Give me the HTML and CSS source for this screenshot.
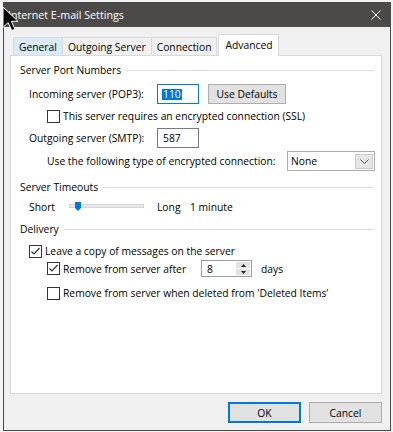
FILE: index.html
```html
<!DOCTYPE html>
<html lang="en">
<head>
    <meta charset="UTF-8">
    <meta name="viewport" content="width=device-width, initial-scale=1.0">
    <title>Internet E-mail Settings</title>
    <link rel="stylesheet" href="styles.css">
</head>
<body>
<div class="screen">
    <div class="dialog">
        <div class="titlebar">
            <span class="title">Internet E-mail Settings</span>
            <svg class="close" width="10" height="10" viewBox="0 0 10 10">
                <path d="M0.5 0.5 L9.5 9.5 M9.5 0.5 L0.5 9.5" />
            </svg>
        </div>

        <div class="dialog-body">
            <div class="tabs">
                <div class="tab tab-hover">General</div>
                <div class="tab">Outgoing Server</div>
                <div class="tab">Connection</div>
                <div class="tab tab-active">Advanced</div>
            </div>

            <div class="panel">
                <div class="group-title first">Server Port Numbers</div>

                <div class="row row-incoming indent-1">
                    <span class="field-label">Incoming server (POP3):</span>
                    <div class="textbox focused"><span class="selection">110</span></div>
                    <button class="btn btn-small">Use Defaults</button>
                </div>

                <div class="row row-ssl indent-2">
                    <span class="check"></span>
                    <span>This server requires an encrypted connection (SSL)</span>
                </div>

                <div class="row row-outgoing indent-1">
                    <span class="field-label">Outgoing server (SMTP):</span>
                    <div class="textbox">587</div>
                </div>

                <div class="row row-encryption indent-2">
                    <span>Use the following type of encrypted connection:</span>
                    <div class="combo">
                        <span>None</span>
                        <span class="combo-button">
                            <svg width="9" height="5" viewBox="0 0 9 5"><path d="M0.5 0.5 L4.5 4.5 L8.5 0.5" /></svg>
                        </span>
                    </div>
                </div>

                <div class="group-title group-timeouts">Server Timeouts</div>

                <div class="row row-timeout indent-1">
                    <span class="slider-label">Short</span>
                    <svg class="slider" width="75" height="16" viewBox="0 0 75 16">
                        <rect class="track" x="0.5" y="5.5" width="74" height="3" />
                        <path class="thumb" d="M6 3 H12 V9 L9 12 L6 9 Z" />
                    </svg>
                    <span class="slider-long">Long</span>
                    <span>1 minute</span>
                </div>

                <div class="group-title group-delivery">Delivery</div>

                <div class="row row-leave indent-1">
                    <span class="check checked">
                        <svg width="11" height="11" viewBox="0 0 11 11"><polyline points="1.5,5.5 4,8 9.5,2" /></svg>
                    </span>
                    <span>Leave a copy of messages on the server</span>
                </div>

                <div class="row row-after indent-2">
                    <span class="check checked">
                        <svg width="11" height="11" viewBox="0 0 11 11"><polyline points="1.5,5.5 4,8 9.5,2" /></svg>
                    </span>
                    <span class="after-label">Remove from server after</span>
                    <div class="spin">
                        <span class="spin-value">8</span>
                        <div class="spin-buttons">
                            <span class="spin-button">
                                <svg width="5" height="3" viewBox="0 0 5 3"><path d="M0 3 L2.5 0 L5 3 Z" /></svg>
                            </span>
                            <span class="spin-button">
                                <svg width="5" height="3" viewBox="0 0 5 3"><path d="M0 0 L5 0 L2.5 3 Z" /></svg>
                            </span>
                        </div>
                    </div>
                    <span class="days">days</span>
                </div>

                <div class="row row-deleted indent-2">
                    <span class="check"></span>
                    <span>Remove from server when deleted from 'Deleted Items'</span>
                </div>
            </div>

            <div class="footer">
                <button class="btn btn-default">OK</button>
                <button class="btn">Cancel</button>
            </div>
        </div>
    </div>

    <!-- mouse pointer sitting on the title bar -->
    <svg class="cursor" width="17" height="26" viewBox="0 0 17 26">
        <path d="M1 1 V21.5 L6 16.5 L9.8 24.5 L13 23.2 L9.3 15.3 L16 15.3 Z" />
    </svg>
</div>
</body>
</html>
```

FILE: styles.css
```css
* {
    margin: 0;
    padding: 0;
    box-sizing: border-box;
}

body {
    font-family: "Open Sans", "Noto Sans", sans-serif;
    font-size: 10.3px;
    color: #000;
    background: #f3f3f3;
}

.screen {
    position: relative;
    width: 393px;
    height: 432px;
    padding: 2px 0 0 3px;
    overflow: hidden;
    background: #f3f3f3;
}

.dialog {
    display: flex;
    flex-direction: column;
    width: 388px;
    height: 429px;
    border: 1px solid #4b4a48;
    border-top: 0;
    background: #f0f0f0;
}

.titlebar {
    display: flex;
    align-items: center;
    justify-content: space-between;
    flex-shrink: 0;
    height: 25px;
    padding: 0 9px 0 4px;
    background: #4b4a48;
    color: #fff;
    font-size: 10.7px;
}

.close path {
    stroke: #fff;
    stroke-width: 1;
    fill: none;
}

.dialog-body {
    display: flex;
    flex-direction: column;
    flex: 1;
    padding: 7px 8px 0 6px;
}

/* tab strip */
.tabs {
    position: relative;
    z-index: 1;
    display: flex;
    align-items: flex-end;
    height: 22px;
    padding-left: 3px;
    margin-bottom: -1px;
}

.tab {
    display: flex;
    align-items: center;
    height: 18px;
    margin-bottom: 1px;
    margin-left: -1px;
    padding: 0 5px;
    border: 1px solid #d9d9d9;
    border-bottom: 0;
    background: #f0f0f0;
}

.tab:first-child {
    margin-left: 0;
}

.tab-hover {
    background: #d9ebf9;
}

.tab-active {
    height: 22px;
    margin-bottom: 0;
    margin-left: 1px;
    padding: 0 6px 2px;
    background: #fff;
}

.panel {
    display: flex;
    flex-direction: column;
    height: 339px;
    border: 1px solid #d9d9d9;
    background: #fff;
}

/* group headings with the rule running to the right */
.group-title {
    display: flex;
    align-items: center;
    height: 16px;
    padding: 0 7px 0 9px;
    white-space: nowrap;
}

.group-title::after {
    content: "";
    flex: 1;
    margin-left: 5px;
    border-top: 1px solid #dcdcdc;
}

.group-title.first {
    margin-top: 6px;
}

.group-timeouts {
    margin-top: 8px;
}

.group-delivery {
    margin-top: 6px;
}

.row {
    display: flex;
    align-items: center;
    height: 16px;
    white-space: nowrap;
}

.indent-1 {
    padding-left: 18px;
}

.indent-2 {
    padding-left: 36px;
}

.row-incoming {
    height: 20px;
    margin-top: 6px;
}

.row-ssl {
    margin-top: 4px;
}

.row-outgoing {
    height: 20px;
    margin-top: 4px;
}

.row-encryption {
    height: 20px;
    margin-top: 3px;
    padding-right: 6px;
}

.row-timeout {
    margin-top: 4px;
}

.row-leave {
    margin-top: 6px;
}

.row-after {
    height: 17px;
    margin-top: 1px;
}

.row-deleted {
    margin-top: 8px;
}

.field-label {
    width: 128px;
}

.textbox {
    display: flex;
    align-items: center;
    width: 42px;
    height: 20px;
    padding-left: 5px;
    border: 1px solid #7a7a7a;
    background: #fff;
}

.textbox.focused {
    padding-left: 4px;
    border-color: #0078d7;
}

.selection {
    padding: 0 1px;
    background: #0078d7;
    color: #fff;
    line-height: 11px;
}

.btn {
    width: 73px;
    height: 21px;
    border: 1px solid #adadad;
    background: #e1e1e1;
    font: inherit;
    color: #000;
}

.btn-small {
    width: 78px;
    height: 20px;
    margin-left: 9px;
}

.btn-default {
    border: 2px solid #0078d7;
}

.check {
    flex-shrink: 0;
    width: 13px;
    height: 13px;
    margin-right: 3px;
    border: 1px solid #333;
    background: #fff;
}

.check svg {
    display: block;
}

.check polyline {
    fill: none;
    stroke: #333;
    stroke-width: 1.2;
}

.combo {
    display: flex;
    align-items: center;
    width: 88px;
    height: 20px;
    margin-left: auto;
    padding-left: 3px;
    border: 1px solid #acacac;
    background: #fff;
}

.combo-button {
    display: flex;
    align-items: center;
    justify-content: center;
    width: 18px;
    height: 15px;
    margin: 0 1px 0 auto;
    border: 1px solid #cccccc;
    background: #e5e5e5;
}

.combo-button path {
    fill: none;
    stroke: #555;
    stroke-width: 1;
}

.slider-label {
    width: 40px;
}

.slider {
    display: block;
    margin-right: 13px;
}

.slider .track {
    fill: #e7eaea;
    stroke: #d6d6d6;
}

.slider .thumb {
    fill: #0078d7;
}

.slider-long {
    width: 33px;
}

.after-label {
    width: 138px;
}

.spin {
    display: flex;
    align-items: center;
    width: 51px;
    height: 17px;
    padding: 0 1px 0 5px;
    border: 1px solid #9c9c9c;
    background: #fff;
}

.spin-value {
    flex: 1;
}

.spin-buttons {
    display: flex;
    flex-direction: column;
    gap: 1px;
    width: 14px;
}

.spin-button {
    display: flex;
    align-items: center;
    justify-content: center;
    height: 6px;
    background: #e3e3e3;
}

.spin-button path {
    fill: #222;
}

.days {
    margin-left: 9px;
}

.footer {
    display: flex;
    justify-content: flex-end;
    gap: 8px;
    padding-top: 8px;
}

.cursor {
    position: absolute;
    left: 2px;
    top: 6px;
}

.cursor path {
    fill: #000;
    stroke: #fff;
    stroke-width: 1;
}
```
